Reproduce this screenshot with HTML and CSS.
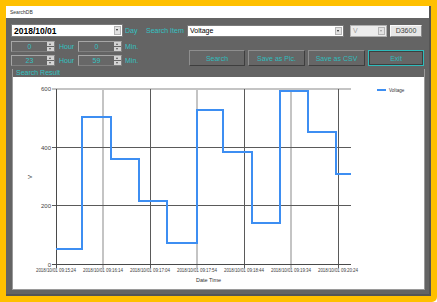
FILE: index.html
```html
<!DOCTYPE html>
<html lang="en">
<head>
  <meta charset="UTF-8" />
  <title>SearchDB</title>
  <link rel="stylesheet" href="styles.css">
</head>
<body>

<div class="window">
  <div class="titlebar">SearchDB</div>

  <div class="controls">
    <div class="row-top">
      <div class="combo date-box"><span class="combo-text">2018/10/01</span><span class="drop"></span></div>
      <span class="lbl day-lbl">Day</span>
      <span class="lbl item-lbl">Search Item</span>
      <div class="combo item-box"><span class="combo-text">Voltage</span><span class="drop"></span></div>
      <div class="combo unit-box"><span class="combo-text">V</span><span class="drop"></span></div>
      <div class="tag">D3600</div>
    </div>

    <div class="row-lower">
      <div class="times">
        <div class="time-row">
          <div class="spin"><span class="spin-val">0</span><span class="spin-btns"><i class="up"></i><i class="down"></i></span></div>
          <span class="lbl hour-lbl">Hour</span>
          <div class="spin"><span class="spin-val">0</span><span class="spin-btns"><i class="up"></i><i class="down"></i></span></div>
          <span class="lbl min-lbl">Min.</span>
        </div>
        <div class="time-row">
          <div class="spin"><span class="spin-val">23</span><span class="spin-btns"><i class="up"></i><i class="down"></i></span></div>
          <span class="lbl hour-lbl">Hour</span>
          <div class="spin"><span class="spin-val">59</span><span class="spin-btns"><i class="up"></i><i class="down"></i></span></div>
          <span class="lbl min-lbl">Min.</span>
        </div>
      </div>
      <div class="buttons">
        <button class="btn w56">Search</button>
        <button class="btn w57">Save as Pic.</button>
        <button class="btn w57">Save as CSV</button>
        <button class="btn w56 focused">Exit</button>
      </div>
    </div>
  </div>

  <div class="group">
    <div class="group-title">Search Result</div>
    <div class="chart">
      <svg width="411" height="212" viewBox="0 0 411 212">
        <!-- grid -->
        <g class="grid-light">
          <line x1="90" y1="12" x2="90" y2="191"/>
          <line x1="184" y1="12" x2="184" y2="191"/>
          <line x1="278" y1="12" x2="278" y2="191"/>
          <line x1="39" y1="12" x2="338" y2="12"/>
        </g>
        <g class="grid-dark">
          <line x1="137.5" y1="12" x2="137.5" y2="191"/>
          <line x1="231.5" y1="12" x2="231.5" y2="191"/>
          <line x1="325.5" y1="12" x2="325.5" y2="191"/>
          <line x1="39" y1="70.5" x2="338" y2="70.5"/>
          <line x1="39" y1="128.5" x2="338" y2="128.5"/>
        </g>
        <g class="axis">
          <line x1="43.5" y1="12" x2="43.5" y2="191"/>
          <line x1="39" y1="187.5" x2="338" y2="187.5"/>
        </g>

        <text class="ty" x="38" y="14">600</text>
        <text class="ty" x="38" y="72.5">400</text>
        <text class="ty" x="38" y="130.5">200</text>
        <text class="ty" x="38" y="189.5">0</text>
        <text class="axis-title" transform="translate(19 100) rotate(-90)">V</text>

        <text class="tx" x="43" y="195" textLength="40">2018/10/01 09:15:24</text>
        <text class="tx" x="90" y="195" textLength="40">2018/10/01 09:16:14</text>
        <text class="tx" x="137" y="195" textLength="40">2018/10/01 09:17:04</text>
        <text class="tx" x="184" y="195" textLength="40">2018/10/01 09:17:54</text>
        <text class="tx" x="231" y="195" textLength="40">2018/10/01 09:18:44</text>
        <text class="tx" x="278" y="195" textLength="40">2018/10/01 09:19:34</text>
        <text class="tx" x="325" y="195" textLength="40">2018/10/01 09:20:24</text>
        <text class="axis-title" x="195.5" y="205">Date Time</text>

        <polyline class="series" points="43,172 69,172 69,40 98,40 98,82 126,82 126,124 154,124 154,166 184,166 184,33 210,33 210,75 239,75 239,146 267,146 267,14 295,14 295,55 323,55 323,97 338,97"/>

        <line class="series" x1="364" y1="13" x2="373" y2="13"/>
        <text class="legend" x="376" y="15">Voltage</text>
      </svg>
    </div>
  </div>
</div>

</body>
</html>
```

FILE: styles.css
```css
html { background: #fff; }
body {
  margin: 0; width: 437px; height: 302px; overflow: hidden;
  background: #ffc000; border-bottom-right-radius: 5px;
  font-family: "Liberation Sans", Arial, sans-serif;
}
.window {
  box-sizing: border-box; width: 425px; height: 290px;
  margin: 6px 0 0 6px; background: #646464;
  border-right: 2px solid #555; border-bottom: 2px solid #555;
}
.titlebar {
  height: 12px; line-height: 12px; padding-left: 4px;
  background: #fff; color: #333; font-size: 5px;
}
.controls { padding: 6px 0 0 5px; }
.lbl { font-size: 7px; color: #33c2c2; white-space: nowrap; }

/* top row */
.row-top { display: flex; align-items: center; height: 13px; }
.combo {
  box-sizing: border-box; display: flex; align-items: center;
  height: 12px; background: #fff; border: 1px solid #7a7a7a;
}
.combo-text { flex: 1; padding-left: 2px; font-size: 7px; color: #000; white-space: nowrap; }
.drop {
  position: relative; box-sizing: border-box;
  width: 7px; height: 8px; margin-right: 1px;
  background: #e2e2e2; border: 1px solid #b4b4b4;
}
.drop::after {
  content: ""; position: absolute; left: 1px; top: 2px;
  border-left: 1.5px solid transparent; border-right: 1.5px solid transparent;
  border-top: 2px solid #222;
}
.date-box { width: 112px; height: 13px; }
.date-box .combo-text { font-size: 8.5px; font-weight: bold; }
.date-box .drop { height: 9px; }
.day-lbl { width: 21px; padding-left: 2px; }
.item-lbl { width: 41px; }
.item-box { width: 157px; }
.unit-box { width: 37px; margin-left: 6px; background: #ececec; border-color: #b0b0b0; }
.unit-box .combo-text { color: #a0a0a0; }
.unit-box .drop::after { border-top-color: #999; }
.tag {
  box-sizing: border-box; width: 32px; height: 12px; margin-left: 3px;
  background: #e6e6e6; border: 1px solid; border-color: #fafafa #8a8a8a #8a8a8a #fafafa;
  font-size: 7px; line-height: 10px; text-align: center; color: #444;
}

/* time rows and buttons */
.row-lower { display: flex; align-items: flex-end; margin-top: 4px; }
.times { width: 178px; display: flex; flex-direction: column; gap: 3px; }
.time-row { display: flex; align-items: center; height: 11px; }
.spin {
  box-sizing: border-box; display: flex; width: 44px; height: 11px;
  background: #676767; border: 1px solid; border-color: #a6a6a6 #808080 #808080 #a6a6a6;
}
.spin-val { flex: 1; text-align: center; font-size: 7px; line-height: 9px; color: #33c2c2; }
.spin-btns { display: flex; flex-direction: column; gap: 1px; width: 7px; }
.spin-btns i { position: relative; flex: 1; background: #d4d4d4; }
.spin-btns i::after {
  content: ""; position: absolute; left: 2px; top: 1px;
  border-left: 1.5px solid transparent; border-right: 1.5px solid transparent;
}
.spin-btns .up::after { border-bottom: 2px solid #555; }
.spin-btns .down::after { border-top: 2px solid #555; }
.hour-lbl { width: 19px; padding-left: 4px; }
.min-lbl { padding-left: 3px; }

.buttons { display: flex; gap: 3px; }
.btn {
  box-sizing: border-box; height: 16px; padding: 0;
  background: #666; color: #30bdbd; font-family: inherit; font-size: 7px;
  border: 1px solid; border-color: #8e8e8e #3e3e3e #3e3e3e #8e8e8e;
}
.w56 { width: 56px; }
.w57 { width: 57px; }
.btn.focused { border-color: #2fbcbc; box-shadow: inset 0 0 0 1px #3e3e3e; }

/* result group */
.group {
  width: 413px; margin: 3px 0 0 6px; box-sizing: border-box;
  border-left: 1px solid #9a9a9a; border-right: 1px solid #9a9a9a; border-bottom: 1px solid #9a9a9a;
}
.group-title { height: 8px; line-height: 8px; padding-left: 3px; font-size: 7px; color: #33c2c2; }
.chart { height: 212px; background: #fff; }
.chart svg { display: block; }
.grid-light line { stroke: #c4c4c4; stroke-width: 2; }
.grid-dark line { stroke: #5a5a5a; stroke-width: 1; }
.axis line { stroke: #4a4a4a; stroke-width: 1; }
.ty { font-family: "Liberation Sans", sans-serif; font-size: 6px; fill: #444; text-anchor: end; }
.tx { font-family: "Liberation Sans", sans-serif; font-size: 4.5px; fill: #444; text-anchor: middle; }
.axis-title { font-family: "Liberation Sans", sans-serif; font-size: 5.5px; fill: #333; text-anchor: middle; }
.legend { font-family: "Liberation Sans", sans-serif; font-size: 4.6px; fill: #333; }
.series { fill: none; stroke: #3d8ef2; stroke-width: 2; }
```
